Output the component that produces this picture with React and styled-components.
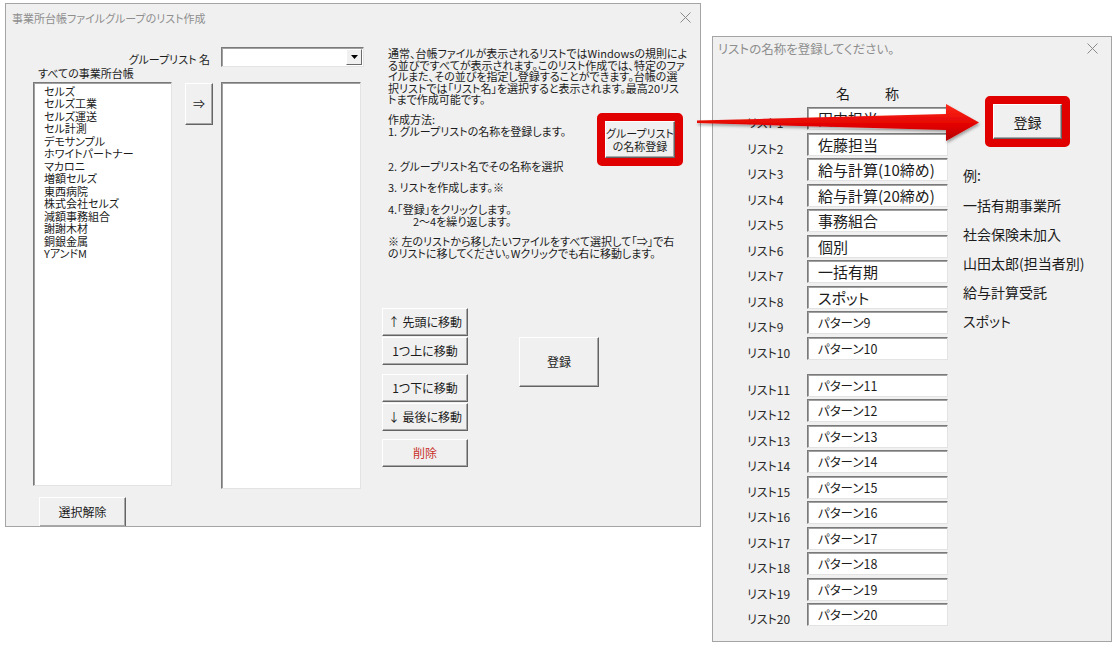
import React from 'react';
import styled, { createGlobalStyle } from 'styled-components';

const FONT = `"Noto Sans CJK JP", "Noto Sans", sans-serif`;

const Global = createGlobalStyle`
  html, body { margin: 0; padding: 0; background: #ffffff; }
  body { font-family: ${FONT}; color: #1c1c1c; font-feature-settings: "palt"; }
`;

const Page = styled.div`
  position: relative;
  box-sizing: border-box;
  width: 1116px;
  height: 648px;
  overflow: hidden;
  display: flex;
  align-items: flex-start;
  gap: 11px;
  padding: 3px 0 0 5px;
`;

const Window = styled.div`
  box-sizing: border-box;
  flex: none;
  width: ${(p) => p.$w}px;
  height: ${(p) => p.$h}px;
  margin-top: ${(p) => p.$top || 0}px;
  background: #f0f0f0;
  border: 1px solid #a4a4a4;
  display: flex;
  flex-direction: column;
  overflow: hidden;
`;

const TitleBar = styled.div`
  flex: none;
  height: ${(p) => p.$h}px;
  display: flex;
  align-items: center;
  justify-content: space-between;
  padding: 0 ${(p) => p.$pr}px 0 ${(p) => p.$pl}px;
  font-size: ${(p) => p.$fs}px;
  color: #8e8e8e;
  white-space: nowrap;
`;

const CloseIcon = () => (
  <svg width="11" height="11" viewBox="0 0 11 11">
    <path d="M0.5 0.5 L10.5 10.5 M10.5 0.5 L0.5 10.5" stroke="#8a8a8a" strokeWidth="1" fill="none" />
  </svg>
);

const Body = styled.div`
  flex: 1;
  min-height: 0;
  display: flex;
  align-items: flex-start;
  padding-left: ${(p) => p.$pl}px;
`;

/* ---------- left window ---------- */

const LeftPane = styled.div`
  flex: none;
  width: 331px;
  display: flex;
  flex-direction: column;
`;

const ComboRow = styled.div`
  display: flex;
  justify-content: flex-end;
  align-items: flex-end;
  gap: 11px;
  margin-top: 16px;
  height: 20px;
`;

const SmallLabel = styled.div`
  font-size: 11px;
  line-height: 12px;
  white-space: nowrap;
  padding-bottom: ${(p) => p.$pb || 0}px;
  margin: ${(p) => p.$m || 0};
`;

const Sunken = styled.div`
  box-sizing: border-box;
  background: #ffffff;
  border: 1px solid;
  border-color: #7a7a7a #e3e3e3 #e3e3e3 #7a7a7a;
  box-shadow: inset 1px 1px 0 #a0a0a0;
`;

const Combo = styled(Sunken)`
  width: 143px;
  height: 20px;
  display: flex;
  justify-content: flex-end;
  align-items: center;
  padding-right: 1px;
`;

const DropBtn = styled.div`
  box-sizing: border-box;
  width: 16px;
  height: 16px;
  background: #f0f0f0;
  border: 1px solid;
  border-color: #ffffff #6a6a6a #6a6a6a #ffffff;
  display: flex;
  align-items: center;
  justify-content: center;
`;

const ListsRow = styled.div`
  display: flex;
  align-items: flex-start;
`;

const ListBox = styled(Sunken)`
  flex: none;
  width: ${(p) => p.$w}px;
  height: ${(p) => p.$h}px;
  padding: 1.5px 0 0 10px;
`;

const ListItem = styled.div`
  font-size: 11px;
  line-height: 12.5px;
  white-space: nowrap;
  color: #1a1a1a;
`;

const RaisedButton = styled.button`
  box-sizing: border-box;
  flex: none;
  width: ${(p) => p.$w}px;
  height: ${(p) => p.$h}px;
  margin: ${(p) => p.$m || 0};
  padding: 0;
  background: #f0f0f0;
  border: 1px solid;
  border-color: #ffffff #646464 #646464 #ffffff;
  box-shadow: inset -1px -1px 0 #a8a8a8;
  font-family: ${FONT};
  font-feature-settings: "palt";
  font-size: ${(p) => p.$fs || 12}px;
  line-height: ${(p) => p.$lh || 14}px;
  color: ${(p) => p.$color || '#1c1c1c'};
  display: flex;
  flex-direction: column;
  align-items: center;
  justify-content: center;
  white-space: nowrap;
`;

const TextPane = styled.div`
  flex: none;
  width: 318px;
  margin-left: 18px;
  padding-top: 17px;
  display: flex;
  flex-direction: column;
`;

const Para = styled.div`
  padding-left: 6px;
  margin-top: ${(p) => p.$mt || 0}px;
  font-size: 11px;
  line-height: 11.5px;
  white-space: nowrap;
  color: #1c1c1c;
`;

const Line = styled.div`
  padding-left: ${(p) => p.$indent || 0}px;
`;

const MethodRow = styled.div`
  display: flex;
  align-items: flex-start;
  margin-top: 8.5px;
`;

const Framed = styled.div`
  position: relative;
  flex: none;
  align-self: flex-start;
  margin: ${(p) => p.$m || 0};
  &::after {
    content: '';
    position: absolute;
    inset: -8px;
    border: 8px solid #e10000;
    border-radius: 5px;
    pointer-events: none;
  }
`;

const ButtonsRow = styled.div`
  display: flex;
  align-items: flex-start;
  margin-top: 49px;
`;

const ButtonCol = styled.div`
  display: flex;
  flex-direction: column;
`;

/* ---------- right window ---------- */

const FormCol = styled.div`
  flex: none;
  display: flex;
  flex-direction: column;
`;

const Header = styled.div`
  display: flex;
  gap: 35px;
  margin-top: 25px;
  padding-left: 89px;
  font-size: 14px;
  line-height: 16px;
`;

const RowGrid = styled.div`
  display: grid;
  grid-template-columns: 60px 141px;
  grid-auto-rows: 23px;
  row-gap: 2.5px;
  margin-top: ${(p) => p.$mt}px;
`;

const RowLabel = styled.div`
  font-size: 12px;
  line-height: 14px;
  margin-top: 9px;
  white-space: nowrap;
  color: #2a2a2a;
`;

const NameInput = styled(Sunken)`
  padding-left: 10px;
  font-size: ${(p) => (p.$small ? 12.5 : 15)}px;
  line-height: 21px;
  white-space: nowrap;
  overflow: hidden;
  color: #1c1c1c;
`;

const RightCol = styled.div`
  flex: none;
  margin-left: 15px;
  display: flex;
  flex-direction: column;
`;

const ExTitle = styled.div`
  margin-top: 28px;
  font-size: 14px;
  line-height: 16px;
`;

const ExList = styled.div`
  margin-top: 8px;
  display: flex;
  flex-direction: column;
`;

const ExItem = styled.div`
  font-size: 14px;
  line-height: 29px;
  white-space: nowrap;
  color: #1c1c1c;
`;

const ArrowLayer = styled.svg`
  position: absolute;
  left: 0;
  top: 0;
  pointer-events: none;
`;

const companies = [
  'セルズ', 'セルズ工業', 'セルズ運送', 'セル計測', 'デモサンプル', 'ホワイトパートナー',
  'マカロニ', '増額セルズ', '東西病院', '株式会社セルズ', '減額事務組合', '謝謝木材',
  '銅銀金属', 'YアンドM',
];

const names1 = ['田中担当', '佐藤担当', '給与計算(10締め)', '給与計算(20締め)', '事務組合', '個別', '一括有期', 'スポット', 'パターン9', 'パターン10'];
const small1 = [false, false, false, false, false, false, false, false, true, true];

const examples = ['一括有期事業所', '社会保険未加入', '山田太郎(担当者別)', '給与計算受託', 'スポット'];

export default function App() {
  const group2 = Array.from({ length: 10 }, (_, i) => i + 11);
  return (
    <>
      <Global />
      <Page>
        <Window $w={696} $h={524}>
          <TitleBar $h={27} $pl={6} $pr={9} $fs={11}>
            <span>事業所台帳ファイルグループのリスト作成</span>
            <CloseIcon />
          </TitleBar>
          <Body $pl={27}>
            <LeftPane>
              <ComboRow>
                <SmallLabel $pb={2}>グループリスト 名</SmallLabel>
                <Combo>
                  <DropBtn>
                    <svg width="7" height="4" viewBox="0 0 7 4"><path d="M0 0 L7 0 L3.5 4 Z" fill="#000" /></svg>
                  </DropBtn>
                </Combo>
              </ComboRow>
              <SmallLabel $m="0 0 3px 5px">すべての事業所台帳</SmallLabel>
              <ListsRow>
                <ListBox $w={139} $h={404}>
                  {companies.map((c) => (
                    <ListItem key={c}>{c}</ListItem>
                  ))}
                </ListBox>
                <RaisedButton $w={28} $h={42} $m="1px 8px 0 13px" $fs={12}>⇒</RaisedButton>
                <ListBox $w={140} $h={407} />
              </ListsRow>
              <RaisedButton $w={87} $h={30} $m="8px 0 0 6px">選択解除</RaisedButton>
            </LeftPane>

            <TextPane>
              <Para>
                <Line>通常、台帳ファイルが表示されるリストではWindowsの規則によ</Line>
                <Line>る並びですべてが表示されます。このリスト作成では、特定のファ</Line>
                <Line>イルまた、その並びを指定し登録することができます。台帳の選</Line>
                <Line>択リストでは「リスト名」を選択すると表示されます。最高20リス</Line>
                <Line>トまで作成可能です。</Line>
              </Para>
              <MethodRow>
                <Para>
                  <Line>作成方法:</Line>
                  <Line>1. グループリストの名称を登録します。</Line>
                </Para>
                <Framed $m="7px 25px 0 auto">
                  <RaisedButton $w={70} $h={37} $fs={11} $lh={13}>
                    <span>グループリスト</span>
                    <span>の名称登録</span>
                  </RaisedButton>
                </Framed>
              </MethodRow>
              <Para $mt={3}>2. グループリスト名でその名称を選択</Para>
              <Para $mt={9.5}>3. リストを作成します。※</Para>
              <Para $mt={10.5}>
                <Line>4.「登録」をクリックします。</Line>
                <Line $indent={25}>2〜4を繰り返します。</Line>
              </Para>
              <Para $mt={9}>
                <Line>※ 左のリストから移したいファイルをすべて選択して「⇒」で右</Line>
                <Line>のリストに移してください。Wクリックでも右に移動します。</Line>
              </Para>
              <ButtonsRow>
                <ButtonCol>
                  <RaisedButton $w={86} $h={28}>↑ 先頭に移動</RaisedButton>
                  <RaisedButton $w={86} $h={28} $m="1px 0 0 0">1つ上に移動</RaisedButton>
                  <RaisedButton $w={86} $h={28} $m="9px 0 0 0">1つ下に移動</RaisedButton>
                  <RaisedButton $w={86} $h={28} $m="1px 0 0 0">↓ 最後に移動</RaisedButton>
                  <RaisedButton $w={86} $h={28} $m="8px 0 0 0" $color="#c8322c">削除</RaisedButton>
                </ButtonCol>
                <RaisedButton $w={80} $h={50} $m="29px 0 0 51px">登録</RaisedButton>
              </ButtonsRow>
            </TextPane>
          </Body>
        </Window>

        <Window $w={400} $h={606} $top={33}>
          <TitleBar $h={23} $pl={5} $pr={13} $fs={12.5}>
            <span>リストの名称を登録してください。</span>
            <CloseIcon />
          </TitleBar>
          <Body $pl={34}>
            <FormCol>
              <Header>
                <span>名</span>
                <span>称</span>
              </Header>
              <RowGrid $mt={6}>
                {names1.map((n, i) => (
                  <React.Fragment key={n}>
                    <RowLabel>リスト{i + 1}</RowLabel>
                    <NameInput $small={small1[i]}>{n}</NameInput>
                  </React.Fragment>
                ))}
              </RowGrid>
              <RowGrid $mt={14}>
                {group2.map((n) => (
                  <React.Fragment key={n}>
                    <RowLabel>リスト{n}</RowLabel>
                    <NameInput $small>パターン{n}</NameInput>
                  </React.Fragment>
                ))}
              </RowGrid>
            </FormCol>
            <RightCol>
              <Framed $m="44px 0 0 30px">
                <RaisedButton $w={69} $h={35} $fs={14}>登録</RaisedButton>
              </Framed>
              <ExTitle>例:</ExTitle>
              <ExList>
                {examples.map((e) => (
                  <ExItem key={e}>{e}</ExItem>
                ))}
              </ExList>
            </RightCol>
          </Body>
        </Window>

        <ArrowLayer width="1116" height="648" viewBox="0 0 1116 648">
          <defs>
            <linearGradient id="arrowFill" x1="0" y1="0" x2="0" y2="1">
              <stop offset="0" stopColor="#ff2a1a" />
              <stop offset="0.6" stopColor="#e00000" />
              <stop offset="1" stopColor="#b30000" />
            </linearGradient>
            <filter id="arrowShadow" x="-5%" y="-50%" width="110%" height="200%">
              <feDropShadow dx="1" dy="2" stdDeviation="1.5" floodColor="#000" floodOpacity="0.35" />
            </filter>
          </defs>
          <polygon
            points="697,120.6 946,114 946,104 979,122.5 946,141 946,130 697,123"
            fill="url(#arrowFill)"
            filter="url(#arrowShadow)"
          />
        </ArrowLayer>
      </Page>
    </>
  );
}
